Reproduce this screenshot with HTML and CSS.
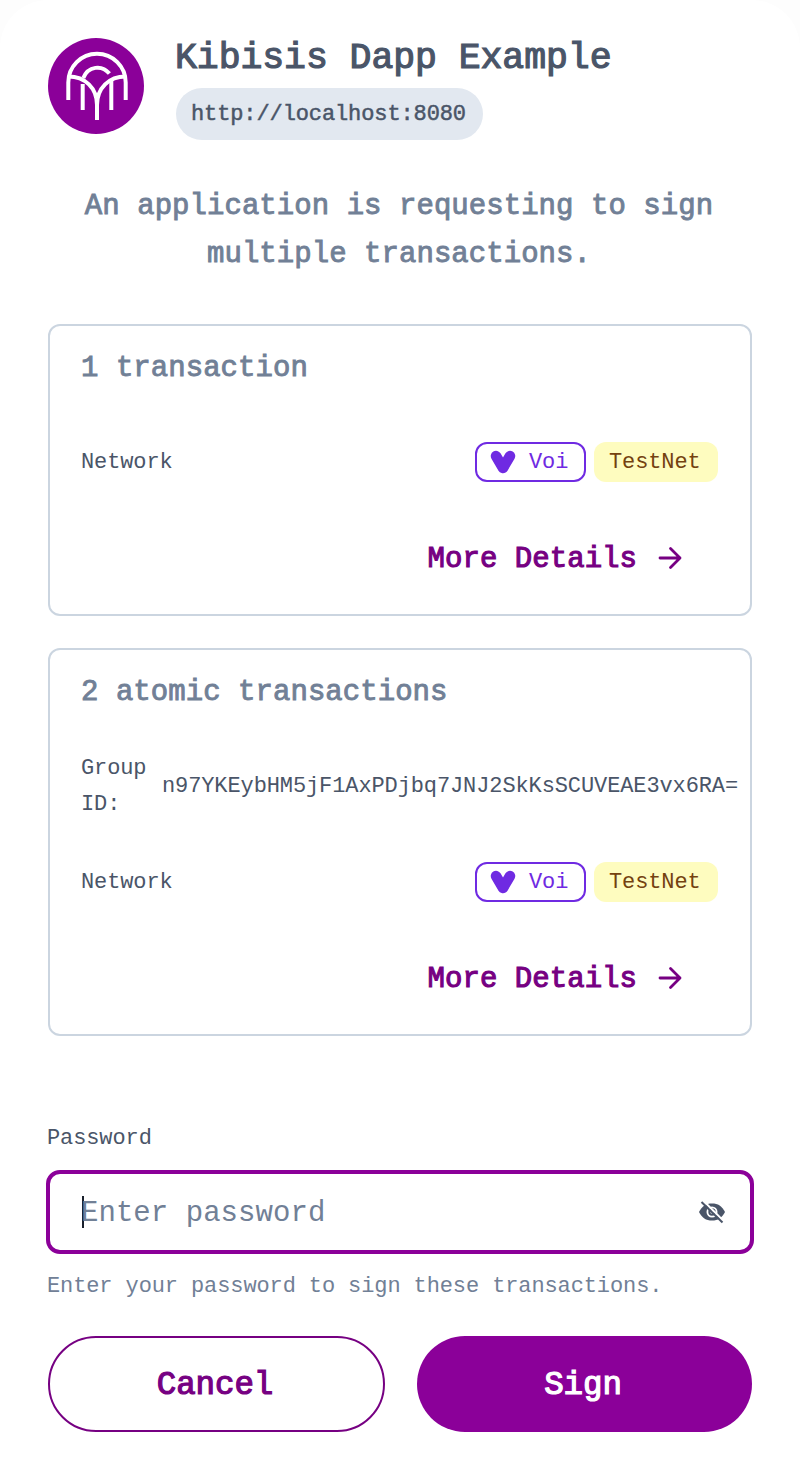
FILE: index.html
```html
<!DOCTYPE html>
<html lang="en">
<head>
<meta charset="utf-8">
<title>Kibisis</title>
<link rel="stylesheet" href="styles.css">
</head>
<body>
<main class="modal">
  <header class="header">
    <svg class="logo" viewBox="0 0 96 96">
      <circle cx="48" cy="48" r="48" fill="#8b0099"/>
      <g fill="none" stroke="#fff" stroke-width="4">
        <path d="M20.3 62V44.4a28.6 28.6 0 0 1 57.4 0V62"/>
        <path d="M20.3 38.5C37 38.5 49 50 49 67V82M77.7 38.5C61 38.5 49 50 49 67"/>
        <path d="M34.7 46V72M63.3 42V72M35.3 40C40 28 54 26.500 61.400 35.600"/>
      </g>
    </svg>
    <div class="app">
      <h1 class="title">Kibisis Dapp Example</h1>
      <span class="host">http://localhost:8080</span>
    </div>
  </header>
  <p class="intro">An application is requesting to sign multiple transactions.</p>
  <section class="card">
    <h2 class="card-title">1 transaction</h2>
    <div class="row">
      <span>Network</span>
      <span class="badges">
        <span class="badge voi"><svg class="heart" viewBox="0 0 26 24"><path d="M6 6l7 12L20 6" fill="none" stroke="#6f2ae2" stroke-width="10.500" stroke-linecap="round" stroke-linejoin="round"/></svg><span>Voi</span></span>
        <span class="badge test"><span>TestNet</span></span>
      </span>
    </div>
    <button class="more"><span>More Details</span> <svg class="arrow" viewBox="0 0 24 24"><path d="M2 12h20M12.500 2.500l9.500 9.500-9.500 9.500"/></svg></button>
  </section>
  <section class="card">
    <h2 class="card-title">2 atomic transactions</h2>
    <div class="row group">
      <span class="group-label">Group ID:</span>
      <span>n97YKEybHM5jF1AxPDjbq7JNJ2SkKsSCUVEAE3vx6RA=</span>
    </div>
    <div class="row">
      <span>Network</span>
      <span class="badges">
        <span class="badge voi"><svg class="heart" viewBox="0 0 26 24"><path d="M6 6l7 12L20 6" fill="none" stroke="#6f2ae2" stroke-width="10.500" stroke-linecap="round" stroke-linejoin="round"/></svg><span>Voi</span></span>
        <span class="badge test"><span>TestNet</span></span>
      </span>
    </div>
    <button class="more"><span>More Details</span> <svg class="arrow" viewBox="0 0 24 24"><path d="M2 12h20M12.500 2.500l9.500 9.500-9.500 9.500"/></svg></button>
  </section>
  <div class="label">Password</div>
  <div class="field">
    <span class="caret"></span>
    <span class="placeholder">Enter password</span>
    <svg class="eye" viewBox="0 0 28 24">
      <path d="M1 12C4 6 8 3.500 14 3.500S24 6 27 12C24 18 20 20.500 14 20.500S4 18 1 12z" fill="#4a5568"/>
      <circle cx="14" cy="12" r="4.600" fill="none" stroke="#fff" stroke-width="1.800"/>
      <circle cx="14" cy="12" r="1.700" fill="#fff"/>
      <path d="M5 .5l21 21" stroke="#fff" stroke-width="2.200"/>
      <path d="M3.500 2l21 20.500" stroke="#4a5568" stroke-width="2"/>
    </svg>
  </div>
  <div class="help">Enter your password to sign these transactions.</div>
  <footer class="actions">
    <button class="button cancel">Cancel</button>
    <button class="button sign">Sign</button>
  </footer>
</main>
</body>
</html>
```
FILE: styles.css
```css
* { box-sizing: border-box; }
body { margin: 0; background: #fdfdfd; }
button { font: inherit; letter-spacing: inherit; background: none; border: 0; padding: 0; }
.modal {
  height: 1480px; padding: 32px 48px 0; border-radius: 48px 48px 0 0; background: #fff; overflow: hidden;
  font: 22px/36px "Liberation Mono", monospace; color: #4a5568; letter-spacing: -.11px;
  display: flex; flex-direction: column;
}
.header { display: flex; gap: 32px; height: 108px; }
.logo { width: 96px; height: 96px; margin-top: 6px; flex: none; }
.app { display: flex; flex-direction: column; align-items: flex-start; }
.title { margin: 0 0 0 -1px; padding-top: 3px; height: 56px; font-size: 36.5px; line-height: 48px; font-weight: normal; -webkit-text-stroke: 1.2px currentColor; letter-spacing: -.08px; white-space: nowrap; }
.host { width: 307px; height: 52px; line-height: 54px; padding: 0 15px; border-radius: 26px; background: #e2e8f0; -webkit-text-stroke: .5px currentColor; }
.intro { margin: 40px 0 0 -2px; padding-top: 3px; height: 96px; text-align: center; font-size: 29px; line-height: 48px; -webkit-text-stroke: .9px currentColor; color: #718096; letter-spacing: .05px; }
.card { border: 2px solid #cbd5e0; border-radius: 12px; padding: 19px 32px 0 31px; margin-top: 32px; height: 388px; flex: none; display: flex; flex-direction: column; }
.intro + .card { margin-top: 48px; height: 292px; }
.card-title { margin: 0 0 33px; font-size: 29px; line-height: 48px; font-weight: normal; -webkit-text-stroke: .9px currentColor; color: #718096; letter-spacing: .05px; }
.row { height: 72px; display: flex; align-items: center; justify-content: space-between; flex: none; }
.row > span:not(.badges) { padding-top: 2px; }
.group { margin-bottom: 24px; justify-content: flex-start; gap: 15px; white-space: nowrap; }
.group-label { width: 66px; white-space: normal; flex: none; }
.badges { display: flex; gap: 8px; }
.badge { height: 40px; border-radius: 12px; display: flex; align-items: center; }
.badge span { padding-top: 2px; }
.voi { width: 111px; border: 2px solid #6f2ae2; color: #6f2ae2; padding-left: 13px; gap: 13px; }
.heart { width: 26px; height: 24px; }
.test { width: 124px; padding-left: 15px; background: #fefcbf; color: #744210; }
.more { align-self: flex-end; display: flex; align-items: center; gap: 21px; margin: 36px 36px 0 0; height: 48px; line-height: 46px; color: #760082; font-size: 29px; -webkit-text-stroke: 1.1px currentColor; letter-spacing: .05px; }
.more span { padding-top: 4px; }
.arrow { width: 24px; height: 24px; fill: none; stroke: #760082; stroke-width: 2.800; stroke-linecap: round; stroke-linejoin: round; }
.label { margin: 85px 0 0 -1px; }
.field { margin: 13px -2px 0; height: 84px; flex: none; border: 4px solid #8b0099; border-radius: 14px; display: flex; align-items: center; padding: 0 24px 0 32px; }
.caret { width: 2px; height: 32px; background: #1a202c; }
.placeholder { margin-left: -3px; padding-top: 4px; flex: 1; font-size: 29px; letter-spacing: .05px; color: #718096; }
.eye { width: 28px; height: 24px; }
.help { margin: 15px 0 0 -1px; color: #718096; white-space: nowrap; }
.actions { display: grid; grid-template-columns: 337px 335px; gap: 32px; margin-top: 31px; }
.button { height: 96px; padding: 4px 3px 0 0; border-radius: 48px; font-size: 32.5px; -webkit-text-stroke: 1.2px currentColor; letter-spacing: -.1px; }
.cancel { border: 2px solid #760082; color: #760082; }
.sign { background: #8b0099; color: #fff; }
```
